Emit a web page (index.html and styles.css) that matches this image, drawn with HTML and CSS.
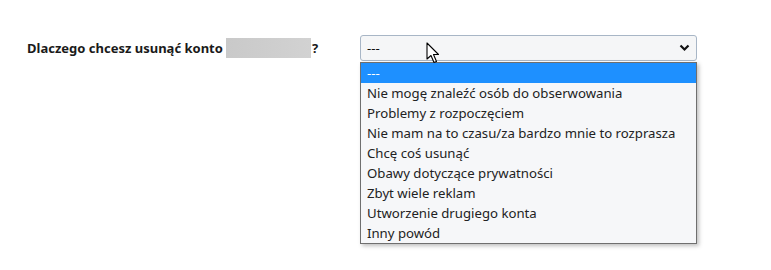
FILE: index.html
```html
<!DOCTYPE html>
<html lang="pl">
<head>
<meta charset="utf-8">
<link rel="stylesheet" href="styles.css">
</head>
<body>
<div class="form-row">
  <div class="label">Dlaczego chcesz usunąć konto<span class="redact"></span>?</div>
  <div class="field">
    <div class="select">
      <span>---</span>
      <svg class="chev" width="11" height="8" viewBox="0 0 11 8"><path d="M1.5 1.5 L5.5 5.5 L9.5 1.5" fill="none" stroke="#111" stroke-width="2.2"/></svg>
    </div>
    <ul class="list">
      <li class="active">---</li>
      <li>Nie mogę znaleźć osób do obserwowania</li>
      <li>Problemy z rozpoczęciem</li>
      <li>Nie mam na to czasu/za bardzo mnie to rozprasza</li>
      <li>Chcę coś usunąć</li>
      <li>Obawy dotyczące prywatności</li>
      <li>Zbyt wiele reklam</li>
      <li>Utworzenie drugiego konta</li>
      <li>Inny powód</li>
    </ul>
    <svg class="cursor" width="16" height="24" viewBox="0 0 16 24"><path d="M1 1 L1 17 L5 13.5 L8 20.5 L10.5 19.5 L7.5 12.5 L12.5 12.5 Z" fill="#fff" stroke="#000" stroke-width="1.1" stroke-linejoin="round"/></svg>
  </div>
</div>
</body>
</html>
```
FILE: styles.css
```css
html, body { margin: 0; padding: 0; background: #fff; }
body { font-family: "Noto Sans", "Open Sans", sans-serif; font-size: 13.2px; color: #222; width: 771px; height: 270px; overflow: hidden; }
.form-row { display: flex; padding: 35px 0 0 27px; }
.label { width: 333px; font-weight: bold; font-size: 13px; line-height: 26px; color: #1a1a1a; display: flex; align-items: center; }
.redact { display: inline-block; width: 85px; height: 20px; background: linear-gradient(90deg, #c9c9c9, #d2d2d2); margin-left: 3px; margin-right: 1px; }
.field { position: relative; width: 337px; }
.select { box-sizing: border-box; height: 26px; border: 1px solid #a8b6c6; border-radius: 3px; background: #f5f6f7; display: flex; align-items: center; justify-content: space-between; padding: 0 6px; color: #111; }
.chev { margin-right: 0; }
.list { position: absolute; left: 0; top: 27px; width: 337px; box-sizing: border-box; margin: 0; padding: 0; list-style: none; background: #f6f7f9; border: 1px solid #6f6f6f; box-shadow: 2px 2px 4px rgba(0,0,0,0.25); }
.list li { height: 20px; line-height: 20px; padding-left: 6px; white-space: nowrap; color: #222; }
.list li.active { background: #1e90ff; color: #fff; }
.cursor { position: absolute; left: 66px; top: 7px; }
```
